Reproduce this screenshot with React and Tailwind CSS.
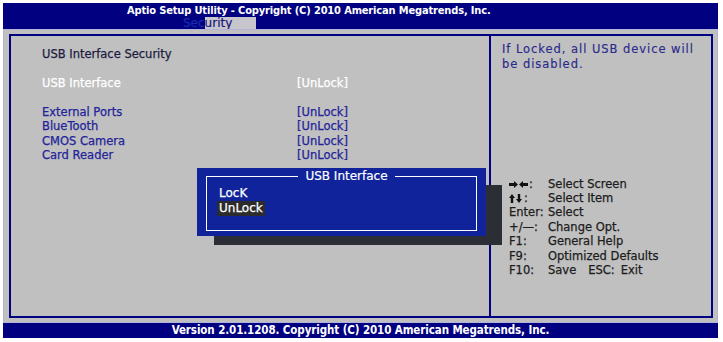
const NAVY = 'bg-[#000080]';

function Row({ label, value, white }) {
  return (
    <div className={`flex h-[14.5px] items-center ${white ? 'text-white' : 'text-[#23239a]'}`}>
      <span className="w-[255px]">{label}</span>
      <span>{value}</span>
    </div>
  );
}

function ArrowRight() {
  return (
    <svg width="9" height="7" viewBox="0 0 9 7" className="inline-block">
      <path d="M0 2h5V0l4 3.5L5 7V5H0z" fill="#111" />
    </svg>
  );
}

function ArrowLeft() {
  return (
    <svg width="9" height="7" viewBox="0 0 9 7" className="inline-block">
      <path d="M9 2H4V0L0 3.5 4 7V5h5z" fill="#111" />
    </svg>
  );
}

function ArrowUp() {
  return (
    <svg width="6" height="9" viewBox="0 0 6 9" className="inline-block">
      <path d="M1.8 9V4H0l3-4 3 4H4.2v5z" fill="#111" />
    </svg>
  );
}

function ArrowDown() {
  return (
    <svg width="6" height="9" viewBox="0 0 6 9" className="inline-block">
      <path d="M1.8 0v5H0l3 4 3-4H4.2V0z" fill="#111" />
    </svg>
  );
}

function KeyLine({ k, children }) {
  return (
    <div className="flex h-[14.4px] items-center">
      <span className="w-[39px]">{k}</span>
      <span>{children}</span>
    </div>
  );
}

export default function App() {
  return (
    <div
      className="h-[342px] w-[723px] bg-white pl-[3px] pt-[3px]"
      style={{ fontFamily: '"DejaVu Sans", Verdana, sans-serif' }}
    >
      <div className="relative flex h-[335px] w-[715px] flex-col">
        {/* header */}
        <div className={`${NAVY} h-[26px] shrink-0`}>
          <div
            className="h-[14px] pl-[124px] pt-[1px] text-[11px] leading-[13px] font-bold tracking-[-0.15px] text-white"
            style={{ fontFamily: '"DejaVu Sans Condensed", "DejaVu Sans", sans-serif' }}
          >
            Aptio Setup Utility - Copyright (C) 2010 American Megatrends, Inc.
          </div>
          <div className="flex h-[12px] pl-[180px] text-[12px] leading-[13px] [-webkit-text-stroke:0.2px]">
            <span className="text-[#1a2bb0]">Sec</span>
            <span className="w-[51px] bg-[#c6c6cc] text-[#15157a]">urity</span>
          </div>
        </div>

        {/* body */}
        <div className="flex flex-1 border border-[#b3b3d9] bg-[#c0c0c0] pt-[4px] pr-[4px] pb-[4px] pl-[5px]">
          <div className="flex flex-1 border-2 border-[#000080]">
            <div className="w-[478px] pt-[11px] pl-[31px] text-[11.5px] [-webkit-text-stroke:0.25px]">
              <div className="flex h-[14.5px] items-center text-[#1c1c40]">USB Interface Security</div>
              <div className="h-[14.5px]" />
              <Row label="USB Interface" value="[UnLock]" white />
              <div className="h-[14.5px]" />
              <Row label="External Ports" value="[UnLock]" />
              <Row label="BlueTooth" value="[UnLock]" />
              <Row label="CMOS Camera" value="[UnLock]" />
              <Row label="Card Reader" value="[UnLock]" />
            </div>
            <div className="flex-1 border-l-2 border-[#000080]">
              <div className="pt-[6px] pl-[11px] text-[11.5px] leading-[14.5px] tracking-[0.95px] text-[#2a2a8c] [-webkit-text-stroke:0.15px]">
                If Locked, all USB device will
                <br />
                be disabled.
              </div>
              <div className="mt-[106px] pl-[18px] text-[11.5px] text-[#1c1c1c] [-webkit-text-stroke:0.25px]">
                <KeyLine k={<span className="flex items-center gap-[1px]"><ArrowRight /><ArrowLeft />:</span>}>Select Screen</KeyLine>
                <KeyLine k={<span className="flex items-center gap-[1px]"><ArrowUp /><ArrowDown /><span className="ml-[1px]">:</span></span>}>Select Item</KeyLine>
                <KeyLine k="Enter:">Select</KeyLine>
                <KeyLine k="+/—:">Change Opt.</KeyLine>
                <KeyLine k="F1:">General Help</KeyLine>
                <KeyLine k="F9:">Optimized Defaults</KeyLine>
                <KeyLine k="F10:">
                  Save<span className="ml-[12px]">ESC:</span>
                  <span className="ml-[6px]">Exit</span>
                </KeyLine>
              </div>
            </div>
          </div>
        </div>

        {/* footer */}
        <div
          className={`${NAVY} flex h-[15px] shrink-0 items-center justify-center text-[11.5px] font-bold tracking-[-0.1px] text-white`}
          style={{ fontFamily: '"DejaVu Sans Condensed", "DejaVu Sans", sans-serif' }}
        >
          Version 2.01.1208. Copyright (C) 2010 American Megatrends, Inc.
        </div>

        {/* popup shadow */}
        <div className="absolute top-[182px] left-[211px] h-[60px] w-[288px] bg-[#2b2e34]" />
        {/* popup */}
        <div className="absolute top-[165px] left-[194px] h-[68px] w-[289px] bg-[#10239a] px-[9px] pt-[1px]">
          <fieldset className="h-[62px] border border-white pl-[10px]">
            <legend className="mx-auto px-[7px] text-[12px] leading-[14px] text-white [-webkit-text-stroke:0.2px]">USB Interface</legend>
            <div className="mt-[3px] text-[12px] leading-[15px] text-white [-webkit-text-stroke:0.25px]">
              <div className="px-[2px]">LocK</div>
              <div className="w-fit bg-[#2c2c2c] px-[2px]">UnLock</div>
            </div>
          </fieldset>
        </div>
      </div>
    </div>
  );
}
